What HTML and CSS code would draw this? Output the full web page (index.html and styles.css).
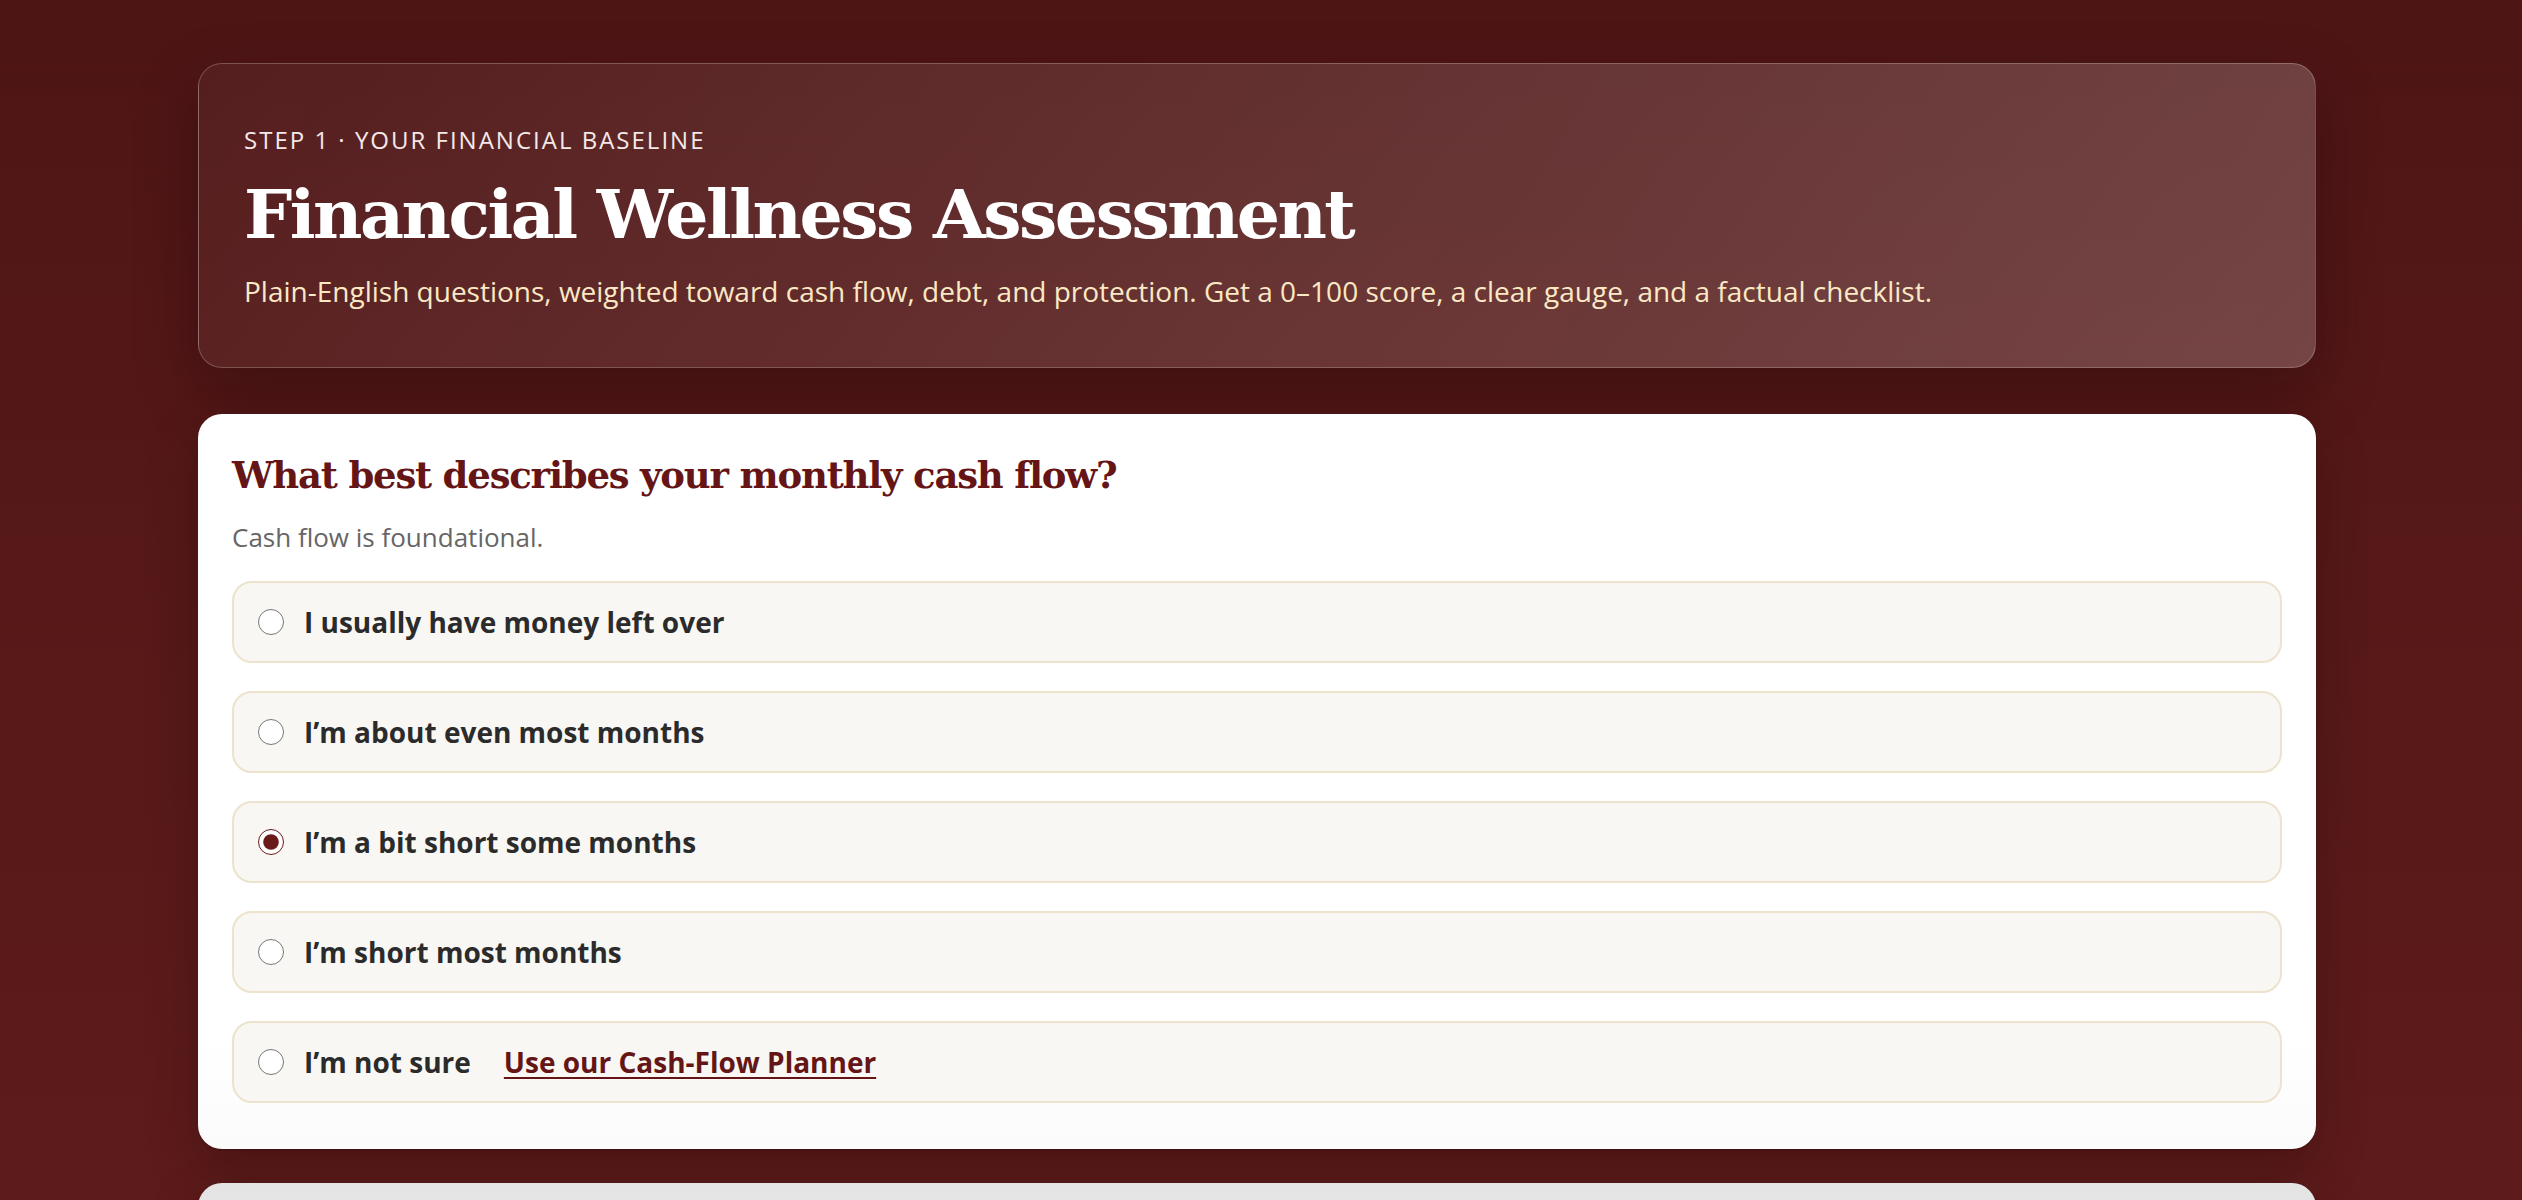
FILE: index.html
```html
<!DOCTYPE html>
<html lang="en">
<head>
<meta charset="utf-8">
<title>Financial Wellness Assessment</title>
<link rel="stylesheet" href="styles.css">
</head>
<body>
<main class="wrap">
  <header class="hero">
    <div class="eyebrow">STEP 1 · YOUR FINANCIAL BASELINE</div>
    <h1 class="title">Financial Wellness Assessment</h1>
    <p class="lead">Plain-English questions, weighted toward cash flow, debt, and protection. Get a 0–100 score, a clear gauge, and a factual checklist.</p>
  </header>

  <section class="card">
    <h2 class="q-title">What best describes your monthly cash flow?</h2>
    <p class="q-hint">Cash flow is foundational.</p>
    <div class="options">
      <label class="option"><input type="radio" name="cash"><span>I usually have money left over</span></label>
      <label class="option"><input type="radio" name="cash"><span>I’m about even most months</span></label>
      <label class="option"><input type="radio" name="cash" checked><span>I’m a bit short some months</span></label>
      <label class="option"><input type="radio" name="cash"><span>I’m short most months</span></label>
      <label class="option"><input type="radio" name="cash"><span>I’m not sure</span><a class="planner" href="#">Use our Cash-Flow Planner</a></label>
    </div>
  </section>

  <section class="card card-next"></section>
</main>
</body>
</html>
```

FILE: styles.css
```css
* { box-sizing: border-box; }
html, body { height: 100%; }
body {
  margin: 0;
  padding: 63px 8px 0 0;
  font-family: "Open Sans", "Noto Sans", sans-serif;
  background: linear-gradient(180deg, #4e1515 0%, #561818 45%, #5e1b1b 100%);
  overflow: hidden;
}
.wrap {
  width: 2118px;
  margin: 0 auto;
  display: flex;
  flex-direction: column;
  gap: 34px;
}
.hero {
  margin-bottom: 12px;
  border-radius: 24px;
  border: 1px solid rgba(255, 255, 255, 0.22);
  background: linear-gradient(120deg, rgba(255,255,255,0.04) 0%, rgba(255,255,255,0.12) 50%, rgba(255,255,255,0.2) 100%);
  box-shadow: 0 24px 60px rgba(30, 5, 5, 0.35);
  padding: 60px 45px 56px;
  color: #fff;
}
.eyebrow {
  font-size: 24px;
  letter-spacing: 2px;
  line-height: 1.3;
  color: #f4e9e9;
}
.title {
  margin: 17px 0 0;
  font-family: "DejaVu Serif", "Liberation Serif", serif;
  font-weight: 700;
  font-size: 68px;
  line-height: 1.25;
  letter-spacing: -2.5px;
  color: #fff;
}
.lead {
  margin: 15px 0 0;
  font-size: 28px;
  line-height: 1.4;
  color: #fbe8c4;
}
.card {
  background: linear-gradient(180deg, #ffffff 85%, #fbfbfb 100%);
  border-radius: 24px;
  box-shadow: 0 2px 0 rgba(0,0,0,0.12), 0 18px 50px rgba(20, 0, 0, 0.25);
  padding: 37px 34px 46px;
}
.q-title {
  margin: 0;
  font-family: "DejaVu Serif", "Liberation Serif", serif;
  font-weight: 700;
  font-size: 37px;
  line-height: 1.35;
  letter-spacing: -1.2px;
  color: #651515;
}
.q-hint {
  margin: 18px 0 0;
  font-size: 26px;
  line-height: 1.4;
  color: #666;
}
.options {
  margin-top: 25px;
  display: flex;
  flex-direction: column;
  gap: 28px;
}
.option {
  height: 82px;
  display: flex;
  align-items: center;
  gap: 20px;
  padding: 0 24px;
  background: #f8f7f3;
  border: 2px solid #ede3cc;
  border-radius: 20px;
  font-weight: 700;
  font-size: 28px;
  color: #2b2b2b;
}
.option input {
  margin: 0;
  width: 26px;
  height: 26px;
  accent-color: #6b1a1a;
}
.planner {
  margin-left: 13px;
  color: #651515;
  text-decoration: underline;
  text-underline-offset: 4px;
  text-decoration-thickness: 2px;
}
.card-next {
  height: 200px;
  background: linear-gradient(180deg, #e4e4e4 0%, #ececec 100%);
  padding: 0;
}
```
